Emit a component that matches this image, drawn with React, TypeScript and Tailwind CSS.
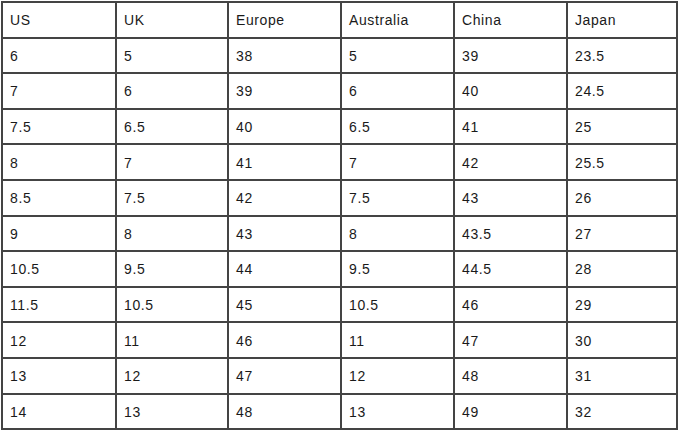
const header = ["US", "UK", "Europe", "Australia", "China", "Japan"];

const rows = [
  ["6", "5", "38", "5", "39", "23.5"],
  ["7", "6", "39", "6", "40", "24.5"],
  ["7.5", "6.5", "40", "6.5", "41", "25"],
  ["8", "7", "41", "7", "42", "25.5"],
  ["8.5", "7.5", "42", "7.5", "43", "26"],
  ["9", "8", "43", "8", "43.5", "27"],
  ["10.5", "9.5", "44", "9.5", "44.5", "28"],
  ["11.5", "10.5", "45", "10.5", "46", "29"],
  ["12", "11", "46", "11", "47", "30"],
  ["13", "12", "47", "12", "48", "31"],
  ["14", "13", "48", "13", "49", "32"],
];

const widths = ["w-[114px]", "w-[112px]", "w-[113px]", "w-[113px]", "w-[113px]", "w-[110px]"];

export default function App() {
  return (
    <div className="w-[680px] h-[430px] bg-white pl-[1px] pt-[1px] overflow-hidden font-['Liberation_Sans',Arial,sans-serif] text-[14px] tracking-[0.6px] text-[#1a1a1a]">
      <table className="table-fixed border-collapse w-[677px]">
        <colgroup>
          {widths.map((w, i) => (
            <col key={i} className={w} />
          ))}
        </colgroup>
        <tbody>
          <tr className="h-[35.6px]">
            {header.map((h) => (
              <td key={h} className="border-2 border-[#444] pl-[7px] pt-[2px] align-middle">
                {h}
              </td>
            ))}
          </tr>
          {rows.map((r, i) => (
            <tr key={i} className="h-[35.6px]">
              {r.map((c, j) => (
                <td key={j} className="border-2 border-[#444] pl-[7px] pt-[2px] align-middle">
                  {c}
                </td>
              ))}
            </tr>
          ))}
        </tbody>
      </table>
    </div>
  );
}
